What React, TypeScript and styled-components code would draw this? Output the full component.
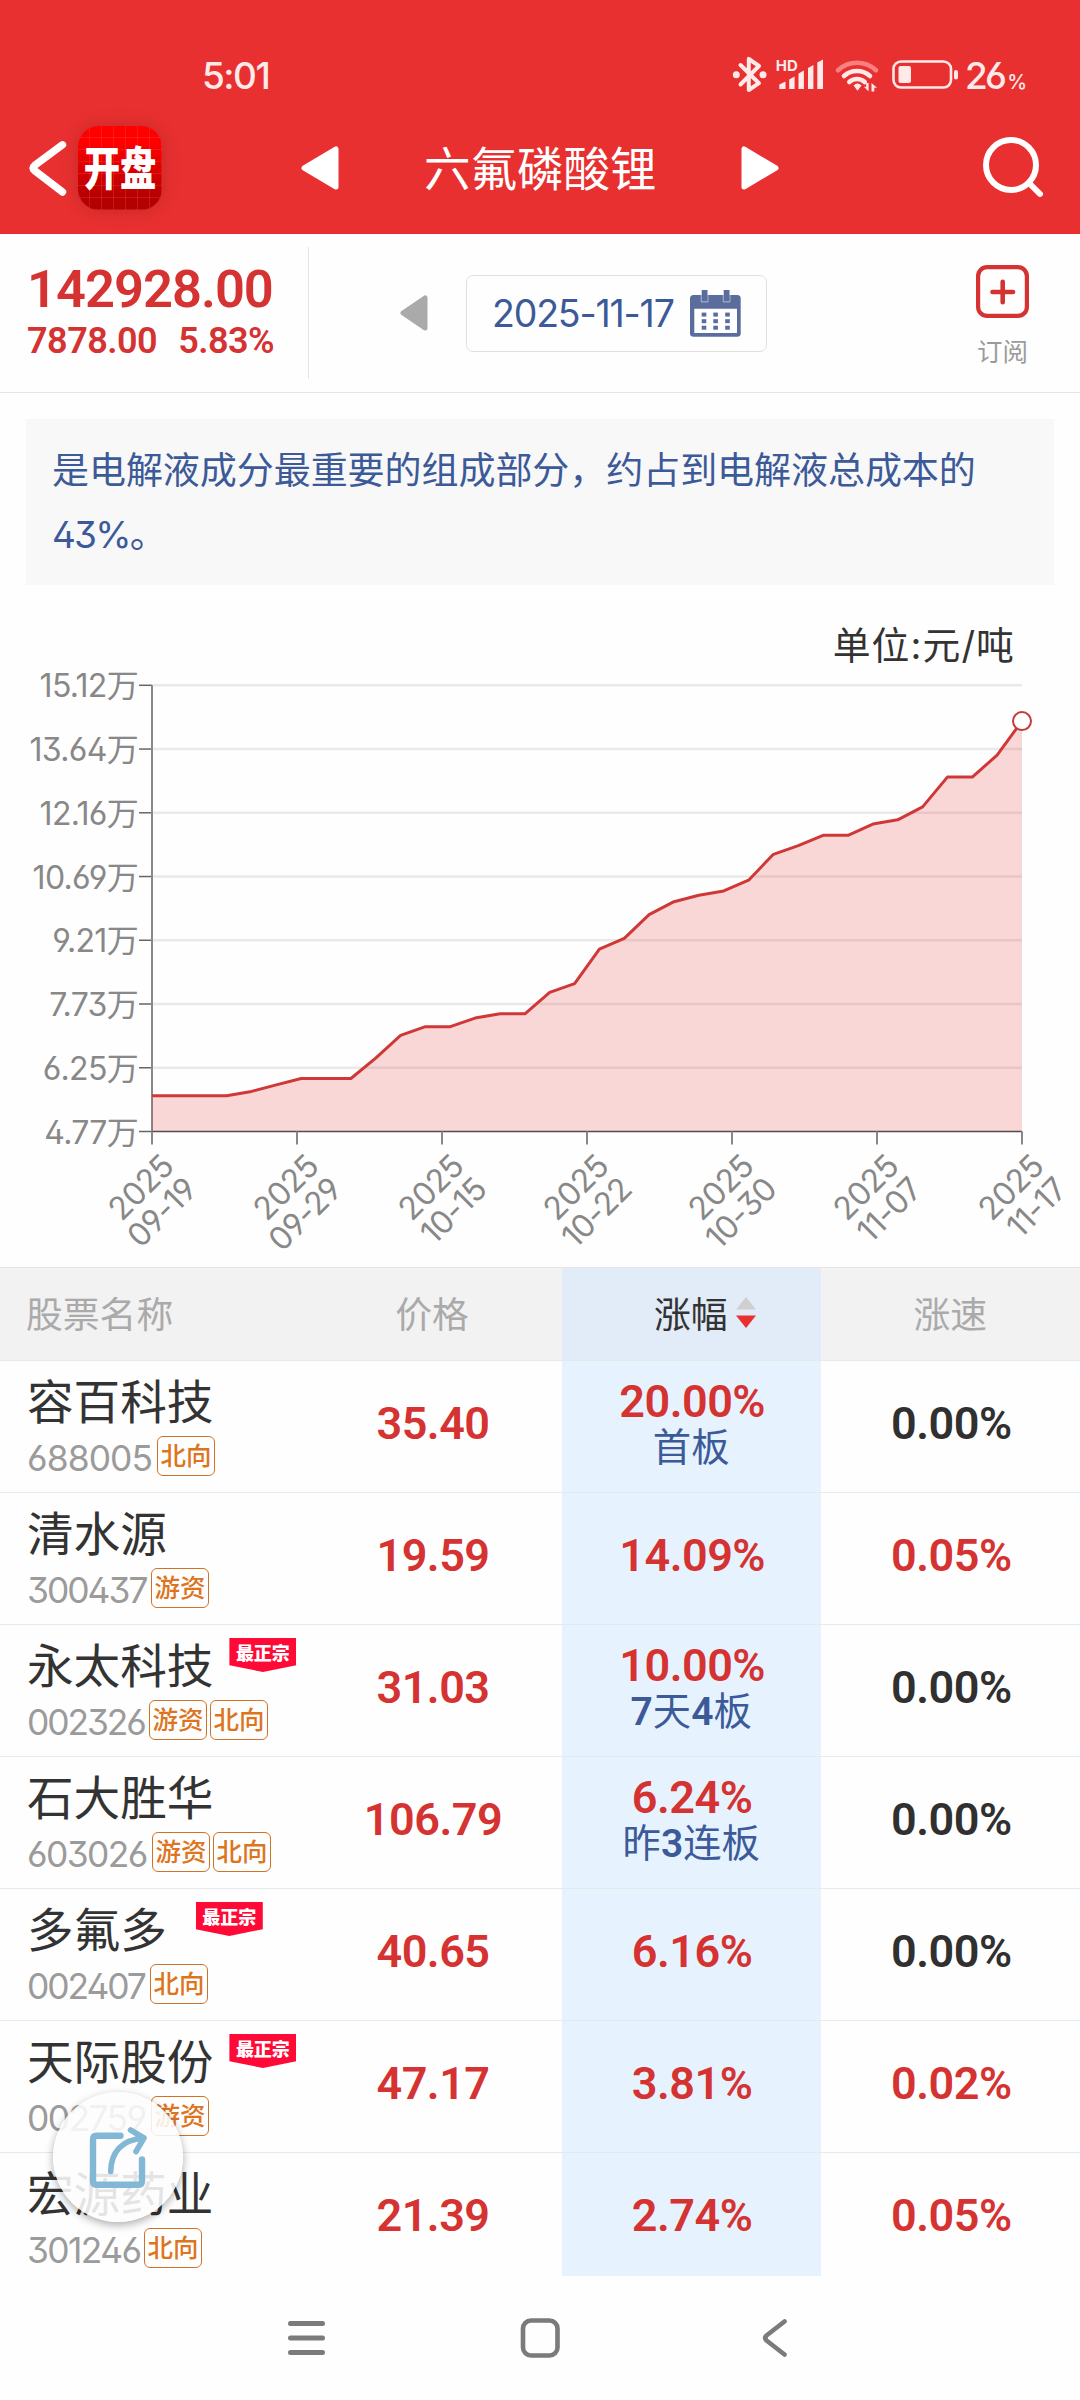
import React from "react";
import styled, { createGlobalStyle } from "styled-components";

const RED = "#d53232";
const BLUE = "#3c5a98";
const SANS = `Inter, "Noto Sans CJK SC", sans-serif`;
const DIN = `Roboto, "Noto Sans CJK SC", sans-serif`;

const GlobalStyle = createGlobalStyle`
  * { box-sizing: border-box; }
  body {
    margin: 0;
    background: #fefefe;
    font-family: ${SANS};
    font-feature-settings: "ss01";
    -webkit-font-smoothing: antialiased;
  }
  svg { display: block; flex: none; }
`;

const Screen = styled.div`
  position: relative;
  display: flex;
  flex-direction: column;
  width: 1080px;
  height: 2400px;
  overflow: hidden;
  background: #fefefe;
`;

/* ---------- header ---------- */

const Header = styled.header`
  height: 234px;
  background: #e83030;
  color: #fff;
`;

const StatusBar = styled.div`
  display: flex;
  align-items: center;
  height: 102px;
  padding: 48px 54px 0 202px;
  color: #ffe9e9;
`;

const Clock = styled.span`
  font-size: 37px;
  font-weight: 500;
  letter-spacing: -1.5px;
  margin-right: auto;
`;

const Percent = styled.span`
  display: flex;
  align-items: baseline;
  margin-left: 6px;
  width: 61px;
  font-size: 37px;
  font-weight: 500;
  letter-spacing: -2.8px;
  small {
    margin-left: 3px;
    font-size: 20px;
    letter-spacing: 0;
  }
`;

const TitleBar = styled.div`
  display: flex;
  align-items: center;
  height: 132px;
  padding: 0 36px 0 26px;
`;

const Logo = styled.div`
  display: flex;
  align-items: center;
  justify-content: center;
  width: 84px;
  height: 84px;
  margin-left: 9px;
  border-radius: 21px;
  background:
    repeating-linear-gradient(90deg, transparent 0 11px, rgba(255, 90, 80, 0.25) 11px 12px),
    repeating-linear-gradient(180deg, transparent 0 11px, rgba(255, 90, 80, 0.25) 11px 12px),
    linear-gradient(#ff0000 20%, #b40000 85%);
  box-shadow: 0 0 16px rgba(130, 30, 30, 0.35);
`;

const LogoText = styled.span`
  flex: none;
  font-size: 46px;
  line-height: 84px;
  font-weight: 900;
  transform: scaleX(0.79);
`;

const Pager = styled.div`
  display: flex;
  align-items: center;
  margin-left: 139px;
`;

const Title = styled.h1`
  margin: 0 84px 0 85px;
  padding-top: 2px;
  font-size: 46.5px;
  line-height: 60px;
  font-weight: 400;
`;

const PushRight = styled.div`
  margin-left: auto;
`;

/* ---------- quote ---------- */

const QuoteBar = styled.section`
  display: flex;
  align-items: flex-start;
  height: 159px;
  border-bottom: 1px solid #e5e5e5;
`;

const Quote = styled.div`
  width: 309px;
  height: 132px;
  margin-top: 13px;
  padding: 17px 0 0 27px;
  border-right: 1px solid #e5e5e5;
  font-family: ${DIN};
  font-weight: 600;
  color: ${RED};
`;

const QuoteValue = styled.div`
  font-size: 52.5px;
  line-height: 50px;
  letter-spacing: -1px;
`;

const QuoteChange = styled.div`
  display: flex;
  gap: 21px;
  font-size: 36px;
  line-height: 54px;
  letter-spacing: -0.5px;
`;

const DateNav = styled.div`
  display: flex;
  align-items: center;
  height: 78px;
  margin: 40px 0 0 91px;
`;

const DateBox = styled.div`
  display: flex;
  align-items: center;
  justify-content: space-between;
  width: 301px;
  height: 77px;
  margin-left: 38px;
  padding: 0 25px 0 25px;
  border: 1px solid #e0e0e0;
  border-radius: 7px;
  font-size: 37.5px;
  letter-spacing: -1.2px;
  white-space: nowrap;
  color: ${BLUE};
`;

const Subscribe = styled.div`
  display: flex;
  flex-direction: column;
  align-items: center;
  margin: 31px 51px 0 auto;
  font-size: 25.5px;
  line-height: 34px;
  color: #9b9b9b;
  svg { margin-bottom: 17px; }
`;

/* ---------- description + chart ---------- */

const Description = styled.p`
  margin: 26px 26px 0;
  height: 166px;
  padding: 20px 26px 0;
  background: #f8f8f9;
  font-size: 37px;
  line-height: 64px;
  letter-spacing: -0.05px;
  color: ${BLUE};
  span { letter-spacing: -1.8px; }
`;

const Unit = styled.div`
  height: 80px;
  padding: 40px 65px 0 0;
  text-align: right;
  font-size: 37.8px;
  line-height: 40px;
  letter-spacing: 1.1px;
  color: #333;
`;

const ChartText = styled.text`
  font-family: ${SANS};
  font-size: 32px;
  letter-spacing: -0.7px;
  fill: #888;
`;

/* ---------- table ---------- */

const Table = styled.section`
  height: 1009px;
  overflow: hidden;
`;

const Row = styled.div`
  display: grid;
  grid-template-columns: 28% 24% 24% 24%;
  height: 132px;
`;

const HeadRow = styled(Row)`
  height: 94px;
  background: #f2f2f2;
  font-size: 36.8px;
  color: #aaa;
`;

const Cell = styled.div<{ $active?: boolean; $head?: boolean }>`
  display: flex;
  flex-direction: column;
  align-items: center;
  justify-content: center;
  padding-bottom: ${(p) => (p.$head ? 4 : 6)}px;
  border-bottom: 1px solid #e6e8e9;
  ${(p) => p.$head && "border-top: 1px solid #e6e6e6; flex-direction: row;"}
  background: ${(p) => (p.$active ? (p.$head ? "#e1ecf8" : "#e6f3ff") : "transparent")};
  ${(p) => p.$active && p.$head && "color: #333; gap: 9px; padding-left: 28px;"}
`;

const NameCell = styled(Cell)`
  align-items: flex-start;
  justify-content: flex-start;
  padding: 0 0 0 27px;
`;

const HeadName = styled(Cell)`
  justify-content: flex-start;
  padding-left: 26px;
`;

const NameLine = styled.div<{ $gap: number }>`
  display: flex;
  align-items: flex-start;
  gap: ${(p) => p.$gap}px;
  height: 75px;
  white-space: nowrap;
`;

const Name = styled.span`
  padding-top: 11px;
  font-size: 46.6px;
  line-height: 60px;
  color: #333;
`;

const Badge = styled.span`
  width: 67px;
  height: 34px;
  margin-top: 13px;
  background: #ff0a36;
  clip-path: polygon(0 0, 100% 0, 100% 80%, 50% 100%, 0 80%);
  text-align: center;
  font-size: 18px;
  line-height: 31px;
  font-weight: 900;
  color: #fff;
`;

const CodeLine = styled.div`
  display: flex;
  align-items: center;
  gap: 3px;
  height: 40px;
`;

const Code = styled.span<{ $width: number; $spacing: number }>`
  width: ${(p) => p.$width}px;
  padding-top: 6px;
  font-size: 35.4px;
  line-height: 40px;
  letter-spacing: ${(p) => p.$spacing}px;
  color: #9b9b9b;
`;

const Tag = styled.span`
  width: 58px;
  height: 40px;
  border: 1px solid #cf7328;
  border-radius: 6px;
  text-align: center;
  font-size: 25.5px;
  font-weight: 500;
  line-height: 38px;
  color: #dd7420;
`;

const Figure = styled.span<{ $flat?: boolean }>`
  font-family: ${DIN};
  font-weight: 600;
  font-size: 45px;
  line-height: 46px;
  letter-spacing: -0.5px;
  padding-left: 2px;
  color: ${(p) => (p.$flat ? "#303030" : RED)};
`;

const Streak = styled.span`
  margin-bottom: -2px;
  font-family: ${DIN};
  font-size: 38.3px;
  line-height: 46px;
  color: ${BLUE};
  b {
    font-weight: 600;
    font-size: 39px;
  }
`;

/* ---------- bottom ---------- */

const NavBar = styled.nav`
  display: flex;
  align-items: center;
  height: 124px;
  padding-left: 285px;
  svg + svg { margin-left: 192px; }
  svg + svg + svg { margin-left: 201px; }
`;

const ShareButton = styled.button`
  position: absolute;
  left: 53px;
  top: 2092px;
  width: 130px;
  height: 130px;
  display: flex;
  align-items: center;
  justify-content: center;
  padding: 0;
  border: 0;
  border-radius: 50%;
  background: rgba(253, 253, 253, 0.88);
  box-shadow: 0 3px 9px rgba(0, 0, 0, 0.32);
`;

/* ---------- icons ---------- */

const Triangle = ({ w, h, color, right }: { w: number; h: number; color: string; right?: boolean }) => (
  <svg width={w} height={h} viewBox={`0 0 ${w} ${h}`}>
    <path
      transform={right ? `matrix(-1 0 0 1 ${w} 0)` : undefined}
      d={`M3 ${h / 2}L${w - 3} 3V${h - 3}Z`}
      fill={color}
      stroke={color}
      strokeWidth="5"
      strokeLinejoin="round"
    />
  </svg>
);

const StatusIcons = () => (
  <svg width="228" height="40" viewBox="731 55 228 40" fill="none" stroke="#ffe9e9">
    <path d="M740.500 65L759 83.200L748.800 90V58.800L759 66L740.500 84.500" strokeWidth="4" strokeLinejoin="round" strokeLinecap="round" />
    <circle cx="736.300" cy="74.800" r="3.500" fill="#ffe9e9" stroke="none" />
    <circle cx="763" cy="74.800" r="3.500" fill="#ffe9e9" stroke="none" />
    <text x="775.800" y="71" fontSize="15" fontWeight="700" fill="#ffe9e9" stroke="none" fontFamily={SANS}>HD</text>
    <g fill="#ffe9e9" stroke="none">
      <path d="M779.300 89v-4.500l6.200-3V89zM789.200 89V79.500l5.400-3V89zM798.500 89V73.500l5.400-3V89zM808 89V68l5.400-3V89zM817.300 89V62.500l5.700-3V89z" />
      <path d="M853.500 85.500q3.800-4 8 0l-4 5.200zM868.600 83v8.500l-4.600-4.800h2.200V83zM871.500 91.500V83l5.500 4.800h-2.700v3.700z" />
    </g>
    <path d="M838 70.200a28 28 0 0 1 38 0" strokeWidth="4.600" stroke="#f88080" strokeLinecap="round" />
    <path d="M844 76a19.500 19.500 0 0 1 26 0M849.300 82a11.500 11.500 0 0 1 15.400 0" strokeWidth="4.600" strokeLinecap="round" />
    <rect x="893.500" y="61.500" width="57.500" height="26" rx="7.500" strokeWidth="2.600" />
    <rect x="898.500" y="66" width="12.500" height="17" rx="2" fill="#ffe9e9" stroke="none" />
    <rect x="954" y="70" width="4" height="9.500" rx="2" fill="#ffe9e9" stroke="none" />
  </svg>
);

const BackIcon = () => (
  <svg width="43" height="60" viewBox="26 138 43 60">
    <path d="M62.500 144.800L34.500 165.500Q31.500 168 34.500 170.500L62.500 192" fill="none" stroke="#fff" strokeWidth="7.400" strokeLinecap="round" strokeLinejoin="round" />
  </svg>
);

const SearchIcon = () => (
  <svg width="64" height="66" viewBox="980 135 64 66" fill="none" stroke="#fff" strokeWidth="6">
    <circle cx="1011" cy="165" r="25" />
    <path d="M1029.500 183.500L1040 194" strokeLinecap="round" />
  </svg>
);

const CalendarIcon = () => (
  <svg width="51" height="47" viewBox="0 0 51 47">
    <rect y="5" width="50.700" height="41.700" rx="3.500" fill="#5b6d9d" />
    <path d="M4.300 18.700h42.700v24.300h-42.700z" fill="#fff" />
    <path d="M11.300 5v6.800h6.600V5M33.300 5v6.800h6.600V5" fill="none" stroke="#c9cfe0" strokeWidth="1" />
    <path d="M11.700 0h5.800v11.300h-5.800zM33.700 0h5.800v11.300h-5.800z" fill="#5b6d9d" />
    {[22.6, 29.2, 35.7].map((y) =>
      [11.7, 23.3, 35.2].map((x) => <rect key={`${x}-${y}`} x={x} y={y} width="4.600" height="4" fill="#5b6d9d" />)
    )}
  </svg>
);

const PlusBox = () => (
  <svg width="53" height="53" viewBox="0 0 53 53" fill="none" stroke={RED} strokeWidth="4.200">
    <rect x="2.100" y="2.100" width="48.800" height="48.800" rx="9" />
    <path d="M16.500 27h20.500M26.700 16.800v20.500" strokeWidth="4.600" strokeLinecap="round" />
  </svg>
);

const SortIcon = () => (
  <svg width="20" height="31" viewBox="0 0 20 31">
    <path d="M0 12.500L10 0l10 12.500z" fill="#cfcfcf" />
    <path d="M0 18.500h20L10 31z" fill="#e83030" />
  </svg>
);

const ShareIcon = () => (
  <svg width="64" height="70" viewBox="86 2122 64 70" fill="none" stroke="#82b7d5" strokeWidth="6.400" strokeLinecap="round" strokeLinejoin="round">
    <path d="M120.500 2135.700H96.500Q93 2135.700 93 2139.500V2181Q93 2184.800 96.500 2184.800H138.500Q142 2184.800 142 2181V2159.500" />
    <path d="M110.700 2171.500C111 2153 121 2139.500 143.500 2138.300M130.500 2130L144 2138L136 2151.500" strokeWidth="5.600" />
  </svg>
);

/* ---------- chart ---------- */

const LEFT = 152;
const RIGHT = 1022;
const TOP = 685.3;
const BOTTOM = 1131.5;

const yLabels = ["15.12", "13.64", "12.16", "10.69", "9.21", "7.73", "6.25", "4.77"];
const xLabels = ["09-19", "09-29", "10-15", "10-22", "10-30", "11-07", "11-17"];

/* daily price in units of 10,000 yuan */
const prices = [
  5.6, 5.6, 5.6, 5.6, 5.7, 5.85, 6, 6, 6, 6.47, 7, 7.2, 7.2, 7.4, 7.5, 7.5, 8, 8.2, 9, 9.25, 9.8, 10.1, 10.25, 10.35,
  10.6, 11.2, 11.4, 11.64, 11.64, 11.9, 12, 12.3, 12.99, 12.99, 13.5, 14.29,
];

const points = prices.map((p, i) => {
  const x = LEFT + ((RIGHT - LEFT) * i) / (prices.length - 1);
  const y = BOTTOM - ((p - 4.77) / (15.12 - 4.77)) * (BOTTOM - TOP);
  return `${x.toFixed(1)},${y.toFixed(1)}`;
});

const lastY = Number(points[points.length - 1].split(",")[1]);

const Chart = () => (
  <svg width="1080" height="602" viewBox="0 665 1080 602">
    {yLabels.map((label, i) => {
      const y = TOP + ((BOTTOM - TOP) * i) / 7;
      return (
        <g key={label}>
          {i < 7 && <path d={`M${LEFT} ${y}H${RIGHT}`} stroke="#e9e9e9" strokeWidth="2.400" />}
          <path d={`M139 ${y}H${LEFT}`} stroke="#666" strokeWidth="1.500" />
          <ChartText x="138" y={y + 12} textAnchor="end">{label}万</ChartText>
        </g>
      );
    })}
    <path d={`M${LEFT} ${TOP}V${BOTTOM}`} stroke="#888" strokeWidth="2" />
    <path d={`M${points.join("L")}L${RIGHT},${BOTTOM}L${LEFT},${BOTTOM}Z`} fill="rgba(235,60,60,0.2)" />
    <path d={`M${LEFT} ${BOTTOM}H${RIGHT}`} stroke="#5a4a4a" strokeWidth="1.400" />
    <path d={`M${points.join("L")}`} fill="none" stroke="#d03838" strokeWidth="3" strokeLinejoin="round" />
    <circle cx={RIGHT} cy={lastY} r="9" fill="#fff" stroke="#c63a3a" strokeWidth="2" />
    {xLabels.map((label, i) => {
      const x = LEFT + 145 * i;
      return (
        <g key={label}>
          <path d={`M${x} ${BOTTOM}v13`} stroke="#888" strokeWidth="2" />
          <ChartText textAnchor="end" transform={`translate(${x + 23.500} 1168.500) rotate(-45)`}>2025</ChartText>
          <ChartText textAnchor="end" transform={`translate(${x + 46.500} 1191.500) rotate(-45)`}>{label}</ChartText>
        </g>
      );
    })}
  </svg>
);

/* ---------- data ---------- */

type Stock = {
  name: string;
  code: string;
  codeWidth: number;
  codeSpacing: number;
  tags: string[];
  badgeGap?: number;
  price: string;
  change: string;
  streak?: string;
  speed: string;
};

const stocks: Stock[] = [
  { name: "容百科技", code: "688005", codeWidth: 127, codeSpacing: -0.9, tags: ["北向"], price: "35.40", change: "20.00%", streak: "首板", speed: "0.00%" },
  { name: "清水源", code: "300437", codeWidth: 121, codeSpacing: -2, tags: ["游资"], price: "19.59", change: "14.09%", speed: "0.05%" },
  { name: "永太科技", code: "002326", codeWidth: 119, codeSpacing: -2.1, tags: ["游资", "北向"], badgeGap: 16, price: "31.03", change: "10.00%", streak: "7天4板", speed: "0.00%" },
  { name: "石大胜华", code: "603026", codeWidth: 122, codeSpacing: -1.6, tags: ["游资", "北向"], price: "106.79", change: "6.24%", streak: "昨3连板", speed: "0.00%" },
  { name: "多氟多", code: "002407", codeWidth: 120, codeSpacing: -2.1, tags: ["北向"], badgeGap: 29, price: "40.65", change: "6.16%", speed: "0.00%" },
  { name: "天际股份", code: "002759", codeWidth: 121, codeSpacing: -1.6, tags: ["游资"], badgeGap: 16, price: "47.17", change: "3.81%", speed: "0.02%" },
  { name: "宏源药业", code: "301246", codeWidth: 114, codeSpacing: -1.6, tags: ["北向"], price: "21.39", change: "2.74%", speed: "0.05%" },
];

const StreakText = ({ text }: { text: string }) => (
  <Streak>{text.split(/(\d)/).map((part, i) => (/\d/.test(part) ? <b key={i}>{part}</b> : part))}</Streak>
);

const StockRow = ({ stock }: { stock: Stock }) => (
  <Row>
    <NameCell>
      <NameLine $gap={stock.badgeGap ?? 0}>
        <Name>{stock.name}</Name>
        {stock.badgeGap && <Badge>最正宗</Badge>}
      </NameLine>
      <CodeLine>
        <Code $width={stock.codeWidth} $spacing={stock.codeSpacing}>{stock.code}</Code>
        {stock.tags.map((t) => <Tag key={t}>{t}</Tag>)}
      </CodeLine>
    </NameCell>
    <Cell><Figure>{stock.price}</Figure></Cell>
    <Cell $active>
      <Figure>{stock.change}</Figure>
      {stock.streak && <StreakText text={stock.streak} />}
    </Cell>
    <Cell><Figure $flat={stock.speed === "0.00%"}>{stock.speed}</Figure></Cell>
  </Row>
);

export default function App() {
  return (
    <Screen>
      <GlobalStyle />
      <Header>
        <StatusBar>
          <Clock>5:01</Clock>
          <StatusIcons />
          <Percent>26<small>%</small></Percent>
        </StatusBar>
        <TitleBar>
          <BackIcon />
          <Logo><LogoText>开盘</LogoText></Logo>
          <Pager>
            <Triangle w={38} h={44} color="#fff" />
            <Title>六氟磷酸锂</Title>
            <Triangle w={38} h={44} color="#fff" right />
          </Pager>
          <PushRight><SearchIcon /></PushRight>
        </TitleBar>
      </Header>

      <QuoteBar>
        <Quote>
          <QuoteValue>142928.00</QuoteValue>
          <QuoteChange><span>7878.00</span><span>5.83%</span></QuoteChange>
        </Quote>
        <DateNav>
          <Triangle w={28} h={36} color="#aaa" />
          <DateBox><span>2025-11-17</span><CalendarIcon /></DateBox>
        </DateNav>
        <Subscribe><PlusBox />订阅</Subscribe>
      </QuoteBar>

      <Description>是电解液成分最重要的组成部分，约占到电解液总成本的<span>43%</span>。</Description>
      <Unit>单位:元/吨</Unit>
      <Chart />

      <Table>
        <HeadRow>
          <HeadName $head>股票名称</HeadName>
          <Cell $head>价格</Cell>
          <Cell $head $active>涨幅<SortIcon /></Cell>
          <Cell $head>涨速</Cell>
        </HeadRow>
        {stocks.map((s) => <StockRow key={s.code} stock={s} />)}
      </Table>

      <NavBar>
        <svg width="43" height="44" viewBox="0 0 43 44" stroke="#7b7b7b" strokeWidth="5" strokeLinecap="round">
          <path d="M5.500 7.500h32M5.500 22h32M5.500 36.500h32" />
        </svg>
        <svg width="40" height="42" viewBox="0 0 40 42" fill="none" stroke="#7b7b7b" strokeWidth="4.600">
          <rect x="3" y="3.500" width="34.500" height="35" rx="8" />
        </svg>
        <svg width="28" height="44" viewBox="0 0 28 44" fill="none" stroke="#7b7b7b" strokeWidth="4.600" strokeLinecap="round" strokeLinejoin="round">
          <path d="M23.500 5.500L5.500 19.500Q3 22 5.500 24.500L23.500 38.500" />
        </svg>
      </NavBar>

      <ShareButton aria-label="分享"><ShareIcon /></ShareButton>
    </Screen>
  );
}
